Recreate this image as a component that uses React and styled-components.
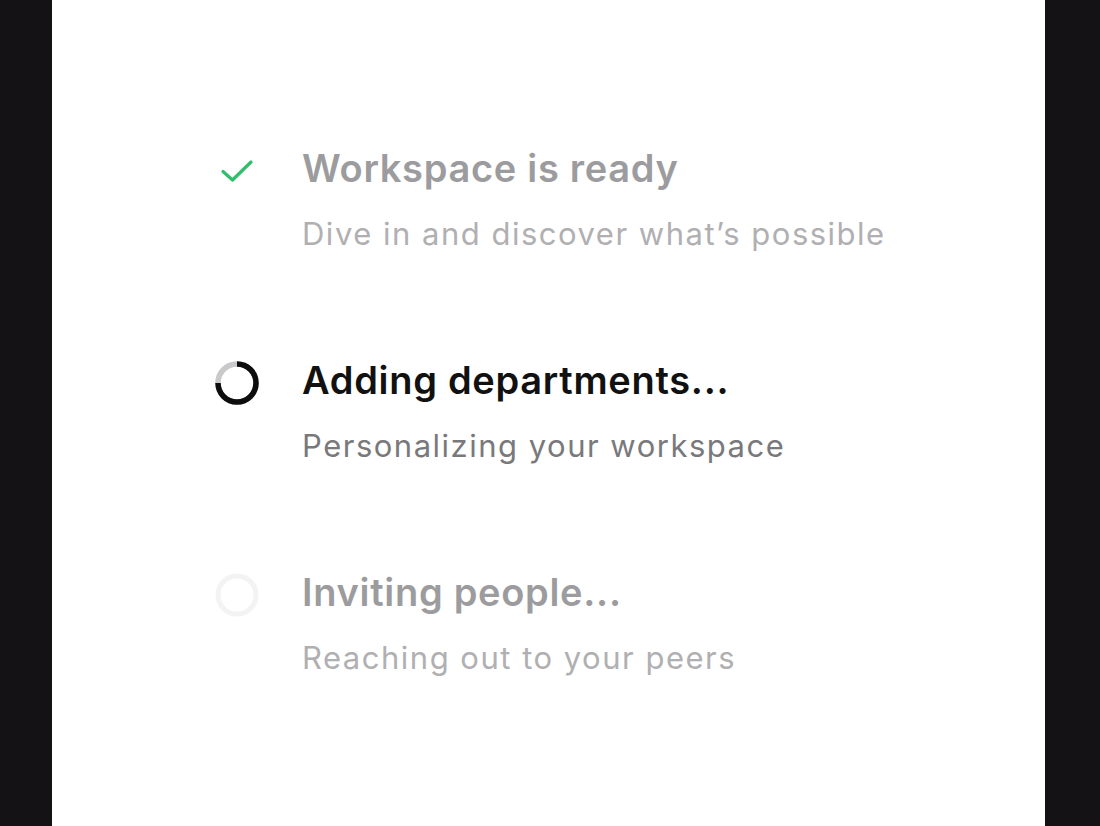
import React from "react";
import styled, { createGlobalStyle } from "styled-components";

const Global = createGlobalStyle`
  html, body { margin: 0; padding: 0; background: #141215; }
  body { font-family: Inter, "Noto Sans", sans-serif; }
`;

const Page = styled.div`
  display: flex;
  height: 826px;
  padding: 0 55px 0 52px;
  box-sizing: border-box;
`;

const Panel = styled.div`
  flex: 1;
  background: #ffffff;
  padding: 146px 0 0 163px;
  display: flex;
  flex-direction: column;
  gap: 104px;
`;

const Step = styled.div`
  display: flex;
  gap: 43px;
`;

const IconBox = styled.div`
  width: 44px;
  height: 44px;
  margin-top: 3px;
  flex: none;
  display: flex;
  align-items: center;
  justify-content: center;
`;

const Texts = styled.div`
  display: flex;
  flex-direction: column;
  gap: 24px;
`;

const Title = styled.div`
  font-size: 38px;
  line-height: 44px;
  font-weight: 600;
  letter-spacing: 0.7px;
  color: ${(p) => (p.$active ? "#111111" : "#9c9c9e")};
`;

const Sub = styled.div`
  font-size: 31px;
  line-height: 40px;
  font-weight: 400;
  letter-spacing: 1.5px;
  color: ${(p) => (p.$active ? "#79797c" : "#b0b0b2")};
`;

const Check = () => (
  <svg width="36" height="36" viewBox="0 0 36 36" fill="none">
    <path d="M4 18.5 L13.5 27 L32 9" stroke="#2fbf6a" strokeWidth="3.2" strokeLinecap="round" strokeLinejoin="round" />
  </svg>
);

const Spinner = () => (
  <svg width="44" height="44" viewBox="0 0 44 44">
    <circle cx="22" cy="22" r="19" fill="none" stroke="#c9c9cb" strokeWidth="5.5" />
    <path d="M22 3 A19 19 0 1 1 3 22" fill="none" stroke="#0d0d0d" strokeWidth="5.5" />
  </svg>
);

const Empty = () => (
  <svg width="44" height="44" viewBox="0 0 44 44">
    <circle cx="22" cy="22" r="19" fill="none" stroke="#f3f3f4" strokeWidth="5" />
  </svg>
);

const steps = [
  { icon: <Check />, title: "Workspace is ready", sub: "Dive in and discover what’s possible" },
  { icon: <Spinner />, title: "Adding departments...", sub: "Personalizing your workspace", active: true },
  { icon: <Empty />, title: "Inviting people...", sub: "Reaching out to your peers" },
];

export default function App() {
  return (
    <>
      <Global />
      <Page>
        <Panel>
          {steps.map((s) => (
            <Step key={s.title}>
              <IconBox>{s.icon}</IconBox>
              <Texts>
                <Title $active={s.active}>{s.title}</Title>
                <Sub $active={s.active}>{s.sub}</Sub>
              </Texts>
            </Step>
          ))}
        </Panel>
      </Page>
    </>
  );
}
